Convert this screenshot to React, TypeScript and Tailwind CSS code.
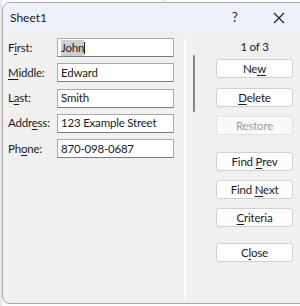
import type { ReactNode } from "react";

const fields = [
    { pre: "F", key: "i", post: "rst:", value: "John", selected: true },
    { pre: "", key: "M", post: "iddle:", value: "Edward" },
    { pre: "L", key: "a", post: "st:", value: "Smith" },
    { pre: "Addr", key: "e", post: "ss:", value: "123 Example Street" },
    { pre: "Ph", key: "o", post: "ne:", value: "870-098-0687" },
];

const Key = ({ children }: { children: ReactNode }) => (
    <span className="underline underline-offset-2">{children}</span>
);

const FormButton = ({
    children,
    disabled,
    className = "",
}: {
    children: ReactNode;
    disabled?: boolean;
    className?: string;
}) => (
    <div
        className={`flex h-[19px] w-[77px] items-center justify-center rounded-[3px] border ${
            disabled
                ? "border-[#e2e2e2] bg-[#f9f9f9] text-[#9d9d9d]"
                : "border-[#d0d0d0] bg-[#fdfdfd] text-[#1b1b1b]"
        } ${className}`}
    >
        <span>{children}</span>
    </div>
);

export default function App() {
    return (
        <div
            className="relative h-[306px] w-[300px] overflow-hidden bg-[#fbfbfb] text-[11.5px] leading-[16px] tracking-[-0.2px] text-[#1b1b1b]"
            style={{ fontFamily: '"Segoe UI", Lato, sans-serif' }}
        >
            {/* sheet peeking out behind the dialog */}
            <div className="absolute left-[163px] top-0 h-[3px] w-px bg-[#c8c8c8]" />
            <div className="absolute left-0 top-0 h-full w-[2px] bg-[#e6e6e6]" />

            <div className="ml-[2px] mt-[2px] flex h-[302px] w-[310px] flex-col overflow-hidden rounded-lg border border-[#a8a8a8] bg-[#f0f0f0]">
                {/* title bar */}
                <div className="flex h-[29px] shrink-0 items-center bg-[#eef2f8] pl-[7px]">
                    <span className="w-[222px] text-[12px] tracking-normal">Sheet1</span>
                    <span className="-mt-[2px] text-[13px]">?</span>
                    <svg
                        className="ml-[35px]"
                        width="12"
                        height="12"
                        viewBox="0 0 12 12"
                    >
                        <path
                            d="M1 1 L11 11 M11 1 L1 11"
                            stroke="#1b1b1b"
                            strokeWidth="1.1"
                        />
                    </svg>
                </div>

                {/* body */}
                <div className="flex flex-1">
                    <div className="flex w-[181px] flex-col gap-[6.3px] pl-[5px] pt-[6px]">
                        {fields.map((f) => (
                            <div key={f.value} className="flex h-[19px] items-center">
                                <span className="w-[49px]">
                                    {f.pre}
                                    <Key>{f.key}</Key>
                                    {f.post}
                                </span>
                                <div className="flex h-[19px] w-[117px] items-center border border-[#a9a9a9] border-b-[#7c7c7c] bg-white pl-[3px]">
                                    {f.selected ? (
                                        <>
                                            <span className="bg-[#cfcfcf]">{f.value}</span>
                                            <span className="h-[12px] w-px bg-[#1b1b1b]" />
                                        </>
                                    ) : (
                                        <span>{f.value}</span>
                                    )}
                                </div>
                            </div>
                        ))}
                    </div>

                    <div className="mt-[6px] mb-[3px] w-[2px] bg-[#fafafa]" />

                    <div className="ml-[7px] pt-[23px]">
                        <div className="h-[57px] w-[2px] rounded-full bg-[#858585]" />
                    </div>

                    <div className="ml-[21px] flex flex-col items-center pt-[7px]">
                        <div className="mb-[4px] h-[16px]">1 of 3</div>
                        <FormButton>
                            Ne<Key>w</Key>
                        </FormButton>
                        <FormButton className="mt-[10px]">
                            <Key>D</Key>elete
                        </FormButton>
                        <FormButton className="mt-[9px]" disabled>
                            Restore
                        </FormButton>
                        <FormButton className="mt-[17px]">
                            Find <Key>P</Key>rev
                        </FormButton>
                        <FormButton className="mt-[9px]">
                            Find <Key>N</Key>ext
                        </FormButton>
                        <FormButton className="mt-[9px]">
                            <Key>C</Key>riteria
                        </FormButton>
                        <FormButton className="mt-[16px]">
                            C<Key>l</Key>ose
                        </FormButton>
                    </div>
                </div>
            </div>
        </div>
    );
}
